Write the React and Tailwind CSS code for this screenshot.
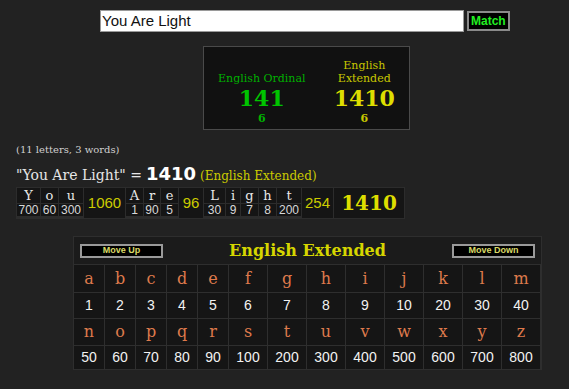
const serif = { fontFamily: '"DejaVu Serif", serif' }

const breakdown = [
  { word: [['Y', 700, 'w-[23px]'], ['o', 60, 'w-[17px]'], ['u', 300, 'w-[24px]']], total: 1060, w: 'w-[41px]' },
  { word: [['A', 1, 'w-[17px]'], ['r', 90, 'w-[16px]'], ['e', 5, 'w-[17px]']], total: 96, w: 'w-[24px]' },
  { word: [['L', 30, 'w-[21px]'], ['i', 9, 'w-[14px]'], ['g', 7, 'w-[17px]'], ['h', 8, 'w-[17px]'], ['t', 200, 'w-[24px]']], total: 254, w: 'w-[31px]' },
]

const rowA = [['a', 1], ['b', 2], ['c', 3], ['d', 4], ['e', 5], ['f', 6], ['g', 7], ['h', 8], ['i', 9], ['j', 10], ['k', 20], ['l', 30], ['m', 40]]
const rowB = [['n', 50], ['o', 60], ['p', 70], ['q', 80], ['r', 90], ['s', 100], ['t', 200], ['u', 300], ['v', 400], ['w', 500], ['x', 600], ['y', 700], ['z', 800]]

function CipherRows({ row, letterH, numH }) {
  return (
    <>
      {row.map(([l]) => (
        <div key={'l' + l} className={`bg-[#151515] flex items-center justify-center text-[16px] text-[#de7a4c] ${letterH}`} style={serif}>
          {l}
        </div>
      ))}
      {row.map(([l, n]) => (
        <div key={'n' + l} className={`bg-[#151515] flex items-center justify-center text-[14px] text-[#f2f2f2] font-['Liberation_Sans',sans-serif] ${numH}`}>
          {n}
        </div>
      ))}
    </>
  )
}

export default function App() {
  return (
    <div className="w-full h-[389px] bg-[#222222] overflow-hidden font-['Liberation_Sans',sans-serif]">
      <div className="flex items-center pt-[10px] pl-[100px] gap-[3px]">
        <div className="w-[364px] h-[22px] bg-white border border-[#9a9a9a] flex items-center px-[1px] text-[15px] text-[#111]">
          You Are Light
        </div>
        <button className="h-[20px] px-[2px] bg-black border-2 border-[#8a8a8a] text-[12px] font-bold text-[#22ee22] leading-none">
          Match
        </button>
      </div>

      <div className="ml-[203px] mt-[14px] w-[207px] h-[84px] bg-[#111111] border border-[#4a4a4a] flex justify-around items-end pb-[3px]" style={serif}>
        <div className="flex flex-col items-center text-[#00b000]">
          <div className="text-[11px] leading-[13px]">English Ordinal</div>
          <div className="text-[22px] font-bold leading-[27px] text-[#00c400]">141</div>
          <div className="text-[11px] font-bold leading-[14px]">6</div>
        </div>
        <div className="flex flex-col items-center text-[#c8c800]">
          <div className="text-[11px] leading-[13px] text-center">English<br />Extended</div>
          <div className="text-[22px] font-bold leading-[27px] text-[#dede00]">1410</div>
          <div className="text-[11px] font-bold leading-[14px]">6</div>
        </div>
      </div>

      <div className="ml-[16px] mt-[12px] text-[10px] text-[#d0d0d0]" style={serif}>(11 letters, 3 words)</div>

      <div className="ml-[16px] mt-[3px] flex items-baseline text-[#e6e6e6]" style={serif}>
        <span className="text-[14px]">"You Are Light" = </span>
        <span className="text-[18px] font-bold font-['DejaVu_Sans',sans-serif] text-white ml-[4px]">1410</span>
        <span className="text-[12px] text-[#cccc00] ml-[4px]">(English Extended)</span>
      </div>

      <div className="ml-[16px] flex w-fit bg-[#2c2c2c] gap-px p-px">
        {breakdown.map((g, gi) => (
          <div key={gi} className="flex gap-px">
            {g.word.map(([l, n, w]) => (
              <div key={l} className={`flex flex-col gap-px ${w}`}>
                <div className="h-[15px] bg-[#151515] flex items-center justify-center text-[13px] text-[#e8e8e8]" style={serif}>
                  {l}
                </div>
                <div className="h-[12px] bg-[#151515] flex items-center justify-center text-[12px] text-[#d8d8d8]">
                  {n}
                </div>
              </div>
            ))}
            <div className={`bg-[#151515] flex items-center justify-center text-[15px] text-[#cccc00] ${g.w}`}>
              {g.total}
            </div>
          </div>
        ))}
        <div className="bg-[#151515] flex items-center justify-center w-[70px] text-[20px] font-bold text-[#dede00]" style={serif}>
          1410
        </div>
      </div>

      <div className="ml-[73px] mt-[17px] w-[469px] bg-[#2e2e2e] p-px flex flex-col gap-px">
        <div className="h-[27px] bg-[#1b1b1b] flex items-center justify-between px-[6px]">
          <button className="w-[83px] h-[14px] bg-black border-2 border-[#9a9a9a] text-[9px] font-bold text-[#dada66] leading-none">Move Up</button>
          <div className="text-[16px] font-bold text-[#d6d600]" style={serif}>English Extended</div>
          <button className="w-[83px] h-[14px] bg-black border-2 border-[#9a9a9a] text-[9px] font-bold text-[#dada66] leading-none">Move Down</button>
        </div>
        <div className="grid grid-cols-[repeat(5,30px)_repeat(8,38px)] gap-px">
          <CipherRows row={rowA} letterH="h-[27px]" numH="h-[25px]" />
          <CipherRows row={rowB} letterH="h-[26px]" numH="h-[23px]" />
        </div>
      </div>
    </div>
  )
}
